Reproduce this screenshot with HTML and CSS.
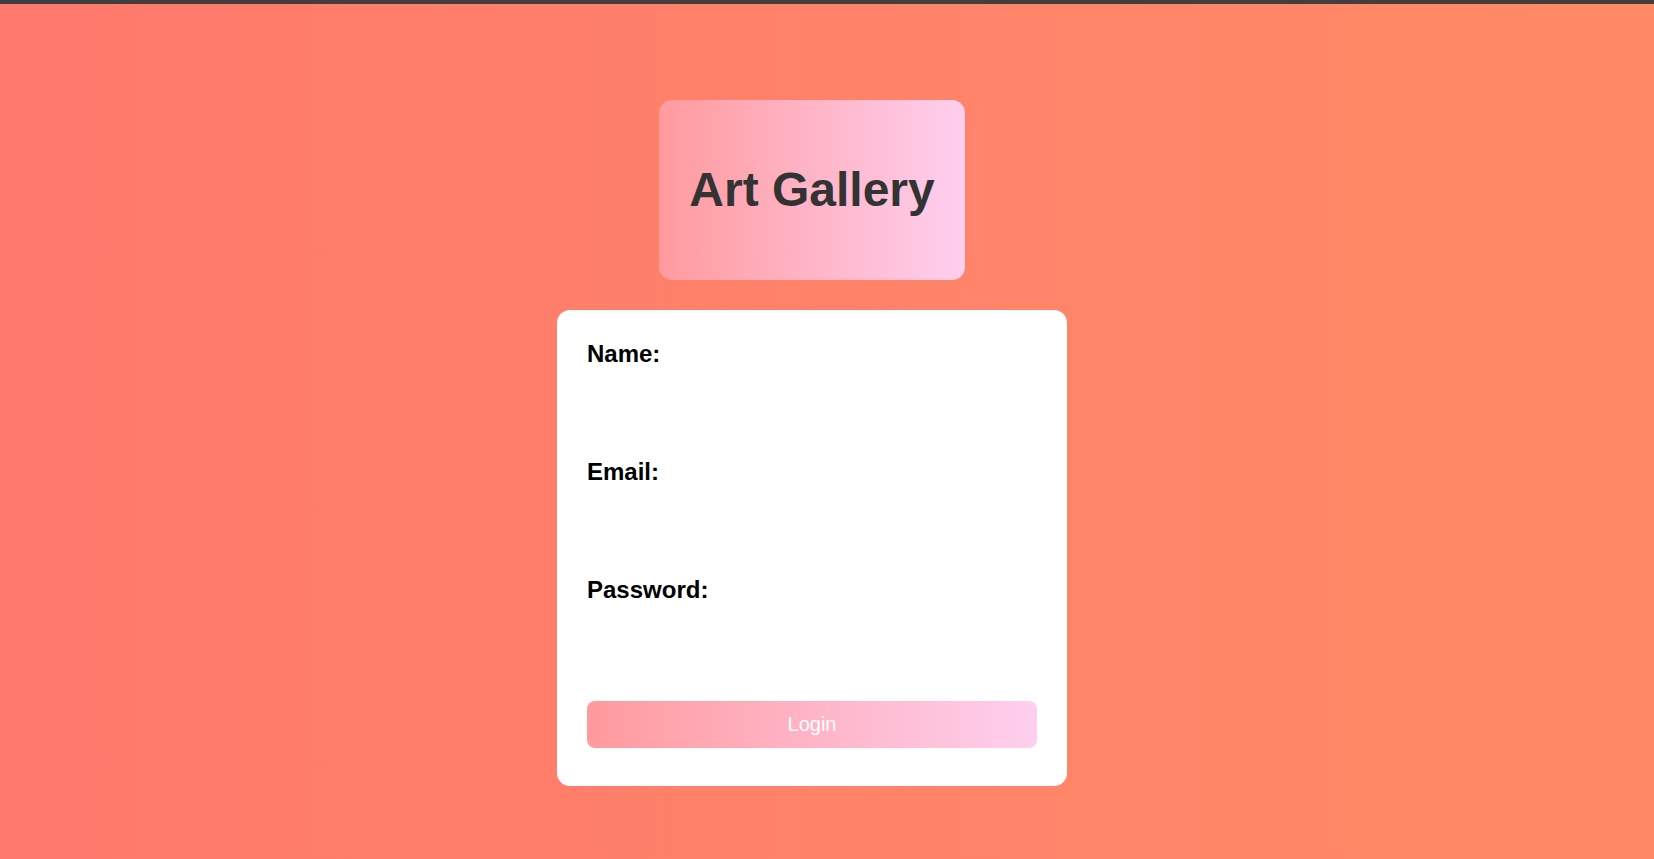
FILE: index.html
```html
<!DOCTYPE html>
<html lang="en">
<head>
<meta charset="utf-8">
<title>Art Gallery</title>
<link rel="stylesheet" href="styles.css">
</head>
<body>
<div class="topbar"></div>
<main class="page">
  <header class="brand">
    <h1 class="brand-title">Art Gallery</h1>
  </header>
  <form class="login-card">
    <div class="field">
      <label class="field-label" for="name">Name:</label>
      <input class="field-input" id="name" type="text">
    </div>
    <div class="field">
      <label class="field-label" for="email">Email:</label>
      <input class="field-input" id="email" type="email">
    </div>
    <div class="field">
      <label class="field-label" for="password">Password:</label>
      <input class="field-input" id="password" type="password">
    </div>
    <button class="login-btn" type="button">Login</button>
  </form>
</main>
</body>
</html>
```
FILE: styles.css
```css
* { box-sizing: border-box; }

html, body {
  margin: 0;
  padding: 0;
  height: 100%;
}

body {
  font-family: "Liberation Sans", Arial, sans-serif;
  background: linear-gradient(to right, #ff796c 0%, #ff8269 50%, #ff8b66 100%);
  overflow: hidden;
}

.topbar {
  height: 4px;
  background: #433d3d;
}

.page {
  display: flex;
  flex-direction: column;
  align-items: center;
  padding: 96px 30px 0 0;
}

.brand {
  width: 306px;
  height: 180px;
  padding: 30px;
  border-radius: 13px;
  background: linear-gradient(to right, #ff9a9e 0%, #fecfef 100%);
  text-align: center;
}

.brand-title {
  margin: 32px 0;
  font-size: 48px;
  font-weight: bold;
  color: #333333;
  white-space: nowrap;
}

.login-card {
  width: 510px;
  margin-top: 30px;
  padding: 30px 30px 38px;
  background: #ffffff;
  border-radius: 13px;
}

.field {
  height: 118px;
}

.field-label {
  display: block;
  font-size: 24px;
  font-weight: bold;
  color: #000000;
}

.field-input {
  display: block;
  width: 100%;
  height: 50px;
  border: none;
  background: transparent;
  outline: none;
}

.login-btn {
  display: block;
  width: 100%;
  height: 47px;
  margin-top: 7px;
  border: none;
  border-radius: 8px;
  background: linear-gradient(to right, #ff9a9e 0%, #fecfef 100%);
  color: #ffffff;
  font-family: "Liberation Sans", Arial, sans-serif;
  font-size: 20px;
  cursor: pointer;
}
```
